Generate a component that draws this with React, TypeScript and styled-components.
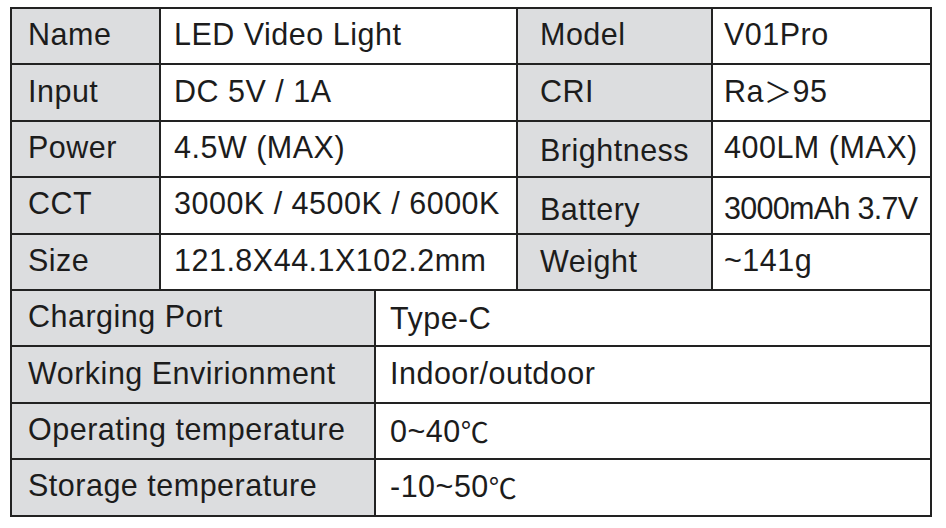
import styled, { createGlobalStyle } from "styled-components";

const GlobalStyle = createGlobalStyle`
  html, body {
    margin: 0;
    padding: 0;
    background: #ffffff;
  }
  body {
    font-family: "Liberation Sans", Arial, "Noto Sans CJK SC", sans-serif;
    color: #1c1c1c;
  }
`;

const Page = styled.div`
  width: 946px;
  height: 528px;
  padding: 7px 0 0 10px;
  box-sizing: border-box;
`;

const Sheet = styled.div`
  width: 922px;
  border: 2px solid #222;
  box-sizing: border-box;
  background: #222;
  display: flex;
  flex-direction: column;
  gap: 2px;
`;

const TopGrid = styled.div`
  display: grid;
  grid-template-columns: 147px 355px 193px 1fr;
  grid-auto-rows: 54.4px;
  gap: 2px;
`;

const BottomGrid = styled.div`
  display: grid;
  grid-template-columns: 362px 1fr;
  grid-auto-rows: 54.4px;
  gap: 2px;
`;

const Cell = styled.div<{ $label?: boolean; $pad?: number; $shift?: number; $tight?: boolean }>`
  background: ${(p) => (p.$label ? "#dcdddf" : "#ffffff")};
  display: flex;
  align-items: center;
  padding-left: ${(p) => p.$pad ?? 14}px;
  padding-top: ${(p) => (p.$shift ?? 0) * 2}px;
  padding-bottom: 3px;
  box-sizing: border-box;
  font-size: 30.5px;
  letter-spacing: ${(p) => (p.$tight ? "-0.7px" : "0.5px")};
  white-space: nowrap;
  overflow: hidden;
`;

const Wide = styled.span`
  font-family: "Noto Sans CJK SC", "Liberation Sans", sans-serif;
  font-size: 28px;
`;

type TopRow = {
  a: string;
  b: React.ReactNode;
  c: string;
  d: React.ReactNode;
  cs?: number;
  ds?: number;
  tight?: boolean;
};

const topRows: TopRow[] = [
  { a: "Name", b: "LED Video Light", c: "Model", d: "V01Pro" },
  { a: "Input", b: "DC 5V / 1A", c: "CRI", d: <>Ra<Wide>＞</Wide>95</> },
  { a: "Power", b: "4.5W (MAX)", c: "Brightness", d: "400LM (MAX)", cs: 3 },
  { a: "CCT", b: "3000K / 4500K / 6000K", c: "Battery", d: "3000mAh 3.7V", cs: 6, ds: 5, tight: true },
  { a: "Size", b: "121.8X44.1X102.2mm", c: "Weight", d: "~141g", cs: 1 },
];

const bottomRows: { a: string; b: React.ReactNode; s?: number }[] = [
  { a: "Charging Port", b: "Type-C", s: 2 },
  { a: "Working Envirionment", b: "Indoor/outdoor" },
  { a: "Operating temperature", b: <>0~40 <Wide>℃</Wide></>, s: 2 },
  { a: "Storage temperature", b: <>-10~50 <Wide>℃</Wide></>, s: 1 },
];

export default function App() {
  return (
    <Page>
      <GlobalStyle />
      <Sheet>
        <TopGrid>
          {topRows.map((r) => (
            <>
              <Cell key={r.a} $label $pad={16}>{r.a}</Cell>
              <Cell $pad={13}>{r.b}</Cell>
              <Cell $label $pad={22} $shift={r.cs}>{r.c}</Cell>
              <Cell $pad={11} $shift={r.ds} $tight={r.tight}>{r.d}</Cell>
            </>
          ))}
        </TopGrid>
        <BottomGrid>
          {bottomRows.map((r) => (
            <>
              <Cell key={r.a} $label $pad={16}>{r.a}</Cell>
              <Cell $pad={14} $shift={r.s}>{r.b}</Cell>
            </>
          ))}
        </BottomGrid>
      </Sheet>
    </Page>
  );
}
